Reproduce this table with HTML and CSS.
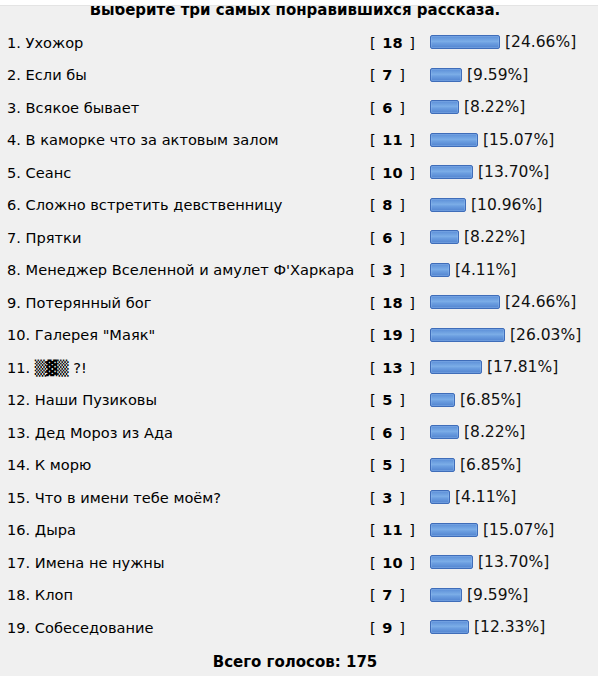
FILE: index.html
```html
<!DOCTYPE html>
<html lang="ru">
<head>
<meta charset="utf-8">
<link rel="stylesheet" href="styles.css">
</head>
<body>
<div class="topstrip"></div>
<div class="poll">
  <div class="title">Выберите три самых понравившихся рассказа.</div>
  <div class="rows">
    <div class="row"><span class="name">1. Ухожор</span><span class="votes">[ <b>18</b> ]</span><span class="res"><span class="bar" style="width:68px"></span><span class="pct">[24.66%]</span></span></div>
    <div class="row"><span class="name">2. Если бы</span><span class="votes">[ <b>7</b> ]</span><span class="res"><span class="bar" style="width:30px"></span><span class="pct">[9.59%]</span></span></div>
    <div class="row"><span class="name">3. Всякое бывает</span><span class="votes">[ <b>6</b> ]</span><span class="res"><span class="bar" style="width:27px"></span><span class="pct">[8.22%]</span></span></div>
    <div class="row"><span class="name">4. В каморке что за актовым залом</span><span class="votes">[ <b>11</b> ]</span><span class="res"><span class="bar" style="width:46px"></span><span class="pct">[15.07%]</span></span></div>
    <div class="row"><span class="name">5. Сеанс</span><span class="votes">[ <b>10</b> ]</span><span class="res"><span class="bar" style="width:41px"></span><span class="pct">[13.70%]</span></span></div>
    <div class="row"><span class="name">6. Сложно встретить девственницу</span><span class="votes">[ <b>8</b> ]</span><span class="res"><span class="bar" style="width:34px"></span><span class="pct">[10.96%]</span></span></div>
    <div class="row"><span class="name">7. Прятки</span><span class="votes">[ <b>6</b> ]</span><span class="res"><span class="bar" style="width:27px"></span><span class="pct">[8.22%]</span></span></div>
    <div class="row"><span class="name">8. Менеджер Вселенной и амулет Ф'Харкара</span><span class="votes">[ <b>3</b> ]</span><span class="res"><span class="bar" style="width:18px"></span><span class="pct">[4.11%]</span></span></div>
    <div class="row"><span class="name">9. Потерянный бог</span><span class="votes">[ <b>18</b> ]</span><span class="res"><span class="bar" style="width:68px"></span><span class="pct">[24.66%]</span></span></div>
    <div class="row"><span class="name">10. Галерея "Маяк"</span><span class="votes">[ <b>19</b> ]</span><span class="res"><span class="bar" style="width:73px"></span><span class="pct">[26.03%]</span></span></div>
    <div class="row"><span class="name">11. <span class="blocks">▒▓▒</span> ?!</span><span class="votes">[ <b>13</b> ]</span><span class="res"><span class="bar" style="width:50px"></span><span class="pct">[17.81%]</span></span></div>
    <div class="row"><span class="name">12. Наши Пузиковы</span><span class="votes">[ <b>5</b> ]</span><span class="res"><span class="bar" style="width:23px"></span><span class="pct">[6.85%]</span></span></div>
    <div class="row"><span class="name">13. Дед Мороз из Ада</span><span class="votes">[ <b>6</b> ]</span><span class="res"><span class="bar" style="width:27px"></span><span class="pct">[8.22%]</span></span></div>
    <div class="row"><span class="name">14. К морю</span><span class="votes">[ <b>5</b> ]</span><span class="res"><span class="bar" style="width:23px"></span><span class="pct">[6.85%]</span></span></div>
    <div class="row"><span class="name">15. Что в имени тебе моём?</span><span class="votes">[ <b>3</b> ]</span><span class="res"><span class="bar" style="width:18px"></span><span class="pct">[4.11%]</span></span></div>
    <div class="row"><span class="name">16. Дыра</span><span class="votes">[ <b>11</b> ]</span><span class="res"><span class="bar" style="width:46px"></span><span class="pct">[15.07%]</span></span></div>
    <div class="row"><span class="name">17. Имена не нужны</span><span class="votes">[ <b>10</b> ]</span><span class="res"><span class="bar" style="width:41px"></span><span class="pct">[13.70%]</span></span></div>
    <div class="row"><span class="name">18. Клоп</span><span class="votes">[ <b>7</b> ]</span><span class="res"><span class="bar" style="width:30px"></span><span class="pct">[9.59%]</span></span></div>
    <div class="row"><span class="name">19. Собеседование</span><span class="votes">[ <b>9</b> ]</span><span class="res"><span class="bar" style="width:37px"></span><span class="pct">[12.33%]</span></span></div>
  </div>
  <div class="total">Всего голосов: 175</div>
</div>
</body>
</html>
```

FILE: styles.css
```css
html, body {
  margin: 0;
  padding: 0;
  background: #f0f0f0;
}
body {
  font-family: "DejaVu Sans", Verdana, sans-serif;
  font-size: 14.6px;
  color: #000;
  width: 598px;
  height: 676px;
  overflow: hidden;
  position: relative;
}
.topstrip {
  position: absolute;
  top: 0;
  left: 0;
  width: 598px;
  height: 5px;
  background: #ffffff;
  border-bottom: 1px solid #e4e4e4;
  z-index: 2;
}
.poll {
  width: 590px;
}
.title {
  height: 26px;
  line-height: 20px;
  font-size: 15px;
  font-weight: bold;
  text-align: center;
  white-space: nowrap;
}
.rows {
  display: flex;
  flex-direction: column;
}
.row {
  display: grid;
  grid-template-columns: 363px 60px auto;
  align-items: center;
  height: 32.5px;
  padding-left: 7px;
  white-space: nowrap;
}
.votes b {
  font-weight: bold;
}
.votes {
  font-size: 14.6px;
  word-spacing: 2px;
}
.res {
  display: flex;
  align-items: center;
  gap: 5px;
}
.bar {
  display: block;
  height: 12px;
  border: 1px solid #3f6db9;
  border-radius: 2px;
  background: linear-gradient(to bottom, #5b8ed7 0%, #7bade7 45%, #6b9ee0 60%, #5284d0 100%);
  box-shadow: inset 0 0 0 1px rgba(150, 190, 240, 0.35);
}
.pct {
  font-size: 15.5px;
  color: #111;
}
.blocks {
  font-size: 14.6px;
  letter-spacing: 0;
}
.total {
  height: 36px;
  line-height: 36px;
  font-size: 15px;
  text-align: center;
  font-weight: bold;
}
```
